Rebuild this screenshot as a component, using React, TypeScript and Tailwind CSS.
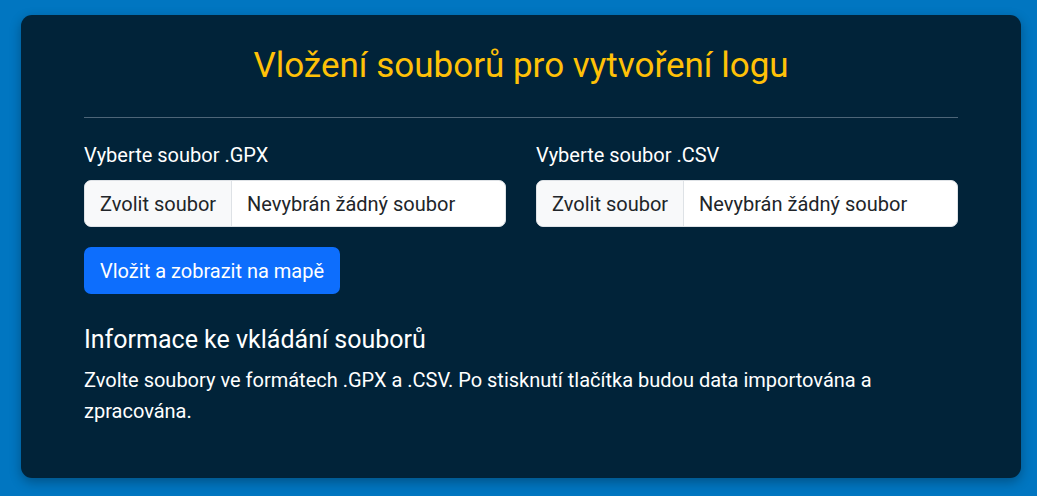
export default function App() {
  const font = { fontFamily: 'Roboto, "Noto Sans", sans-serif' };
  const FileInput = ({ label }: { label: string }) => (
    <div className="flex flex-col">
      <label className="text-[20px] leading-[30px] text-white mb-[10px]">{label}</label>
      <div className="flex h-[47px] rounded-[7px] border border-[#dee2e6] bg-white overflow-hidden text-[20px] text-[#212529]">
        <div className="flex items-center px-[15px] bg-[#f8f9fa] border-r border-[#dee2e6]">Zvolit soubor</div>
        <div className="flex items-center px-[15px]">Nevybrán žádný soubor</div>
      </div>
    </div>
  );
  return (
    <div className="w-[1037px] h-[496px] bg-[#0176c1] pt-[15px] pl-[21px]" style={font}>
      <div className="w-[1000px] h-[463px] rounded-[11px] bg-[#012339] shadow-[0_4px_12px_rgba(0,0,0,0.3)] px-[63px] pt-[30px]">
        <h1 className="text-center text-[35px] leading-[42px] text-[#ffc107]">Vložení souborů pro vytvoření logu</h1>
        <div className="mt-[30px] h-px bg-[#4d6578]"></div>
        <div className="grid grid-cols-2 gap-[30px] mt-[22px]">
          <FileInput label="Vyberte soubor .GPX" />
          <FileInput label="Vyberte soubor .CSV" />
        </div>
        <button className="mt-[20px] h-[47px] px-[16px] rounded-[7px] bg-[#0d6efd] text-white text-[20px]">Vložit a zobrazit na mapě</button>
        <h2 className="mt-[31px] text-[25px] leading-[30px] text-white">Informace ke vkládání souborů</h2>
        <p className="mt-[10px] text-[20px] leading-[31px] text-white">Zvolte soubory ve formátech .GPX a .CSV. Po stisknutí tlačítka budou data importována a zpracována.</p>
      </div>
    </div>
  );
}
